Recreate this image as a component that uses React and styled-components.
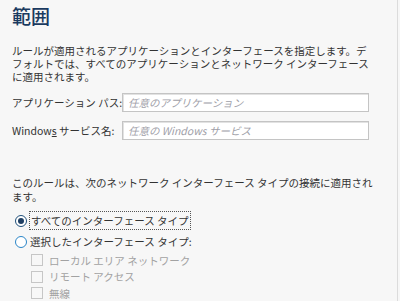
import React from "react";
import styled, { createGlobalStyle } from "styled-components";

const GlobalStyle = createGlobalStyle`
  html, body {
    margin: 0;
    padding: 0;
    background: #f7f7f7;
  }
  body {
    font-family: "Noto Sans CJK JP", "Liberation Sans", sans-serif;
    color: #333;
  }
`;

export default function App() {
  return (
    <>
      <GlobalStyle />
      <Page>
        <Title>範囲</Title>
        <Para>
          ルールが適用されるアプリケーションとインターフェースを指定します。デフォルトでは、すべてのアプリケーションとネットワーク インターフェースに適用されます。
        </Para>
        <Form>
          <Row>
            <Label>アプリケーション パス:</Label>
            <Input placeholder="任意のアプリケーション" />
          </Row>
          <Row>
            <Label>
              Window<u>s</u> サービス名:
            </Label>
            <Input placeholder="任意の Windows サービス" />
          </Row>
        </Form>
        <Para2>
          このルールは、次のネットワーク インターフェース タイプの接続に適用されます。
        </Para2>
        <Options>
          <RadioRow>
            <Radio checked />
            <Focused>すべてのインターフェース タイプ</Focused>
          </RadioRow>
          <RadioRow>
            <Radio />
            <span>選択したインターフェース タイプ:</span>
          </RadioRow>
          <Checks>
            <CheckRow>
              <Box />
              ローカル エリア ネットワーク
            </CheckRow>
            <CheckRow>
              <Box />
              リモート アクセス
            </CheckRow>
            <CheckRow>
              <Box />
              無線
            </CheckRow>
          </Checks>
        </Options>
      </Page>
    </>
  );
}

const Page = styled.div`
  width: 398px;
  height: 301px;
  box-sizing: border-box;
  padding: 4px 0 0 12px;
  border-right: 1px solid #dcdcdc;
  overflow: hidden;
  font-size: 10.5px;
`;

const Title = styled.h1`
  margin: 0;
  font-size: 19px;
  line-height: 24px;
  font-weight: 500;
  color: #1a3a60;
`;

const Para = styled.p`
  margin: 16px 0 0;
  width: 362px;
  line-height: 13px;
`;

const Para2 = styled(Para)`
  margin-top: 36px;
  line-height: 14px;
`;

const Form = styled.div`
  display: flex;
  flex-direction: column;
  gap: 9px;
  margin-top: 10px;
`;

const Row = styled.div`
  display: flex;
  align-items: center;
  height: 19px;
`;

const Label = styled.label`
  width: 110px;
  white-space: nowrap;
`;

const Input = styled.input`
  width: 247px;
  height: 19px;
  box-sizing: border-box;
  border: 1px solid #c4c4c4;
  box-shadow: inset 1px 1px 0 #e2e2e2;
  background: #fff;
  padding: 0 5px;
  font-family: inherit;
  font-size: 10.5px;
  &::placeholder {
    color: #a0a0a8;
    font-style: italic;
  }
`;

const Options = styled.div`
  margin-top: 6px;
  display: flex;
  flex-direction: column;
`;

const RadioRow = styled.div`
  display: flex;
  align-items: center;
  height: 21px;
  gap: 3px;
  padding-left: 3px;
`;

const Radio = styled.span`
  width: 10px;
  height: 10px;
  border-radius: 50%;
  border: 1.5px solid ${(p) => (p.checked ? "#1f4f7a" : "#2b86c8")};
  background: #fff;
  position: relative;
  &::after {
    content: "";
    display: ${(p) => (p.checked ? "block" : "none")};
    position: absolute;
    left: 2px;
    top: 2px;
    width: 6px;
    height: 6px;
    border-radius: 50%;
    background: #1f3f63;
  }
`;

const Focused = styled.span`
  outline: 1px dotted #555;
  padding: 1px;
`;

const Checks = styled.div`
  display: flex;
  flex-direction: column;
  padding-left: 19px;
`;

const CheckRow = styled.div`
  display: flex;
  align-items: center;
  height: 16.5px;
  gap: 6px;
  color: #a2a2a2;
`;

const Box = styled.span`
  width: 10px;
  height: 10px;
  border: 1px solid #c6c6c6;
  background: #f7f7f7;
`;
